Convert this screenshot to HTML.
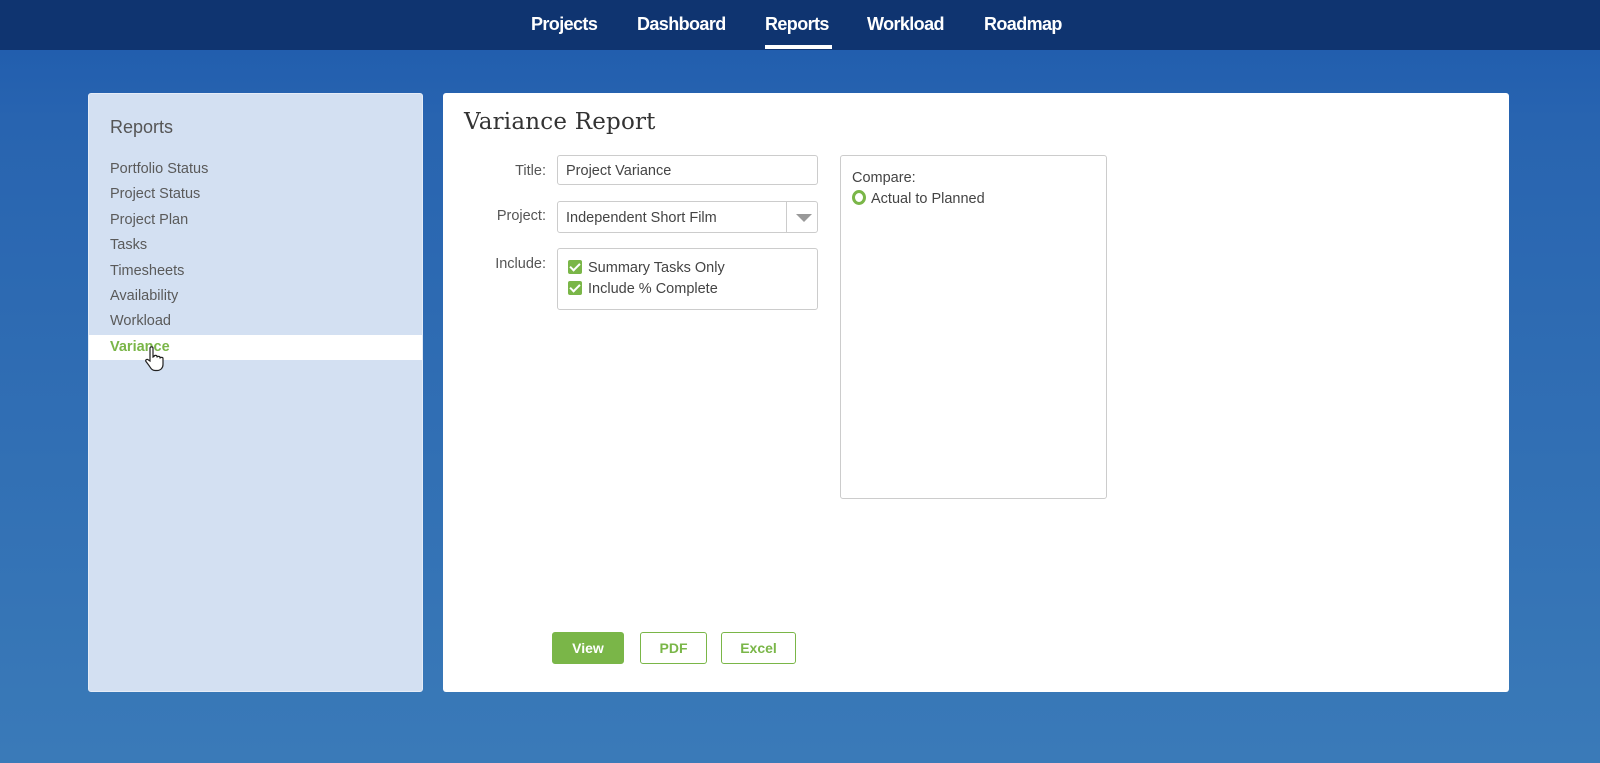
<!DOCTYPE html>
<html><head><meta charset="utf-8"><style>
*{box-sizing:border-box;margin:0;padding:0}
body{width:1600px;height:763px;overflow:hidden;font-family:"Liberation Sans",sans-serif;background:linear-gradient(#1d5aad 0px,#2864b0 120px,#3a7ab8 763px);position:relative}
.nav{position:absolute;left:0;top:0;width:1600px;height:50px;background:#0f3470}
.nav span{position:absolute;top:14px;color:#fff;font-weight:bold;font-size:18px;letter-spacing:-0.6px}
.ul{position:absolute;left:765px;top:45px;width:67px;height:4px;background:#fff}
.side{position:absolute;left:88px;top:93px;width:335px;height:599px;background:#d3e0f2;border:1px solid #e5ecf7;border-radius:3px}
.side h3{position:absolute;left:21px;top:23px;font-weight:normal;font-size:18px;color:#555}
.side .it{position:absolute;left:21px;font-size:14.5px;color:#5a5a5a}
.side .hl{position:absolute;left:0;top:241px;width:333px;height:25px;background:#fff}
.main{position:absolute;left:443px;top:93px;width:1066px;height:599px;background:#fff;border-radius:3px}
h1{position:absolute;left:464px;top:109px;font-family:"DejaVu Serif",serif;font-weight:normal;font-size:23px;color:#333;letter-spacing:0.2px}
.lbl{position:absolute;font-size:14.5px;color:#555;text-align:right;width:100px;left:446px}
.box{position:absolute;border:1px solid #ccc;border-radius:3px;background:#fff;font-size:14.5px;color:#444}
.chk{display:inline-block;width:14px;height:14px;background:#7ab648;border-radius:2px;vertical-align:-2px;margin-right:6px;position:relative}
.chk:after{content:"";position:absolute;left:4px;top:1px;width:4px;height:8px;border:solid #fff;border-width:0 2px 2px 0;transform:rotate(45deg)}
.btn{position:absolute;top:632px;height:32px;border:1px solid #7ab648;border-radius:3px;color:#7ab648;font-weight:bold;font-size:14px;text-align:center;line-height:30px}
</style></head><body>
<div class="nav">
<span style="left:531px">Projects</span><span style="left:637px">Dashboard</span><span style="left:765px">Reports</span><span style="left:867px">Workload</span><span style="left:984px">Roadmap</span>
<div class="ul"></div></div>
<div class="side">
<h3>Reports</h3>
<div class="it" style="top:67px">Portfolio Status</div>
<div class="it" style="top:92px">Project Status</div>
<div class="it" style="top:118px">Project Plan</div>
<div class="it" style="top:143px">Tasks</div>
<div class="it" style="top:169px">Timesheets</div>
<div class="it" style="top:194px">Availability</div>
<div class="it" style="top:219px">Workload</div>
<div class="hl"></div>
<div class="it" style="top:245px;color:#7ab648;font-weight:bold">Variance</div>
<svg style="position:absolute;left:56px;top:252px" width="20" height="26" viewBox="0 0 20 26"><path d="M5 2c0-1.5 3-1.5 3 0v9l1-.5c0-1.5 3-1.5 3 0v1c0-1.5 3-1.5 3 0v1c0-1.5 3-1.5 3 0v6c0 3-2 6-6 6h-2c-3 0-4-2-6-5l-3-4c-1-1.5 1-3 2.5-1.5L5 15z" fill="#fff" stroke="#222" stroke-width="1.2"/></svg>
</div>
<div class="main"></div>
<h1>Variance Report</h1>
<div class="lbl" style="top:163px">Title:</div>
<div class="box" style="left:557px;top:155px;width:261px;height:30px;padding:7px 8px">Project Variance</div>
<div class="lbl" style="top:208px">Project:</div>
<div class="box" style="left:557px;top:201px;width:261px;height:32px;padding:8px 8px">Independent Short Film
<div style="position:absolute;left:228px;top:0;width:1px;height:30px;background:#ccc"></div>
<div style="position:absolute;left:238px;top:12px;border-left:8px solid transparent;border-right:8px solid transparent;border-top:8px solid #999"></div></div>
<div class="lbl" style="top:256px">Include:</div>
<div class="box" style="left:557px;top:248px;width:261px;height:62px;padding:9px 10px;line-height:21px"><span class="chk"></span>Summary Tasks Only<br><span class="chk"></span>Include % Complete</div>
<div class="box" style="left:840px;top:155px;width:267px;height:344px;padding:12px 11px;line-height:21px">Compare:<br><span style="display:inline-block;width:14px;height:15px;border:3px solid #7ab648;border-radius:50%;vertical-align:-2px;margin-right:5px"></span>Actual to Planned</div>
<div class="btn" style="left:552px;width:72px;background:#7ab648;color:#fff">View</div>
<div class="btn" style="left:640px;width:67px">PDF</div>
<div class="btn" style="left:721px;width:75px">Excel</div>
</body></html>
